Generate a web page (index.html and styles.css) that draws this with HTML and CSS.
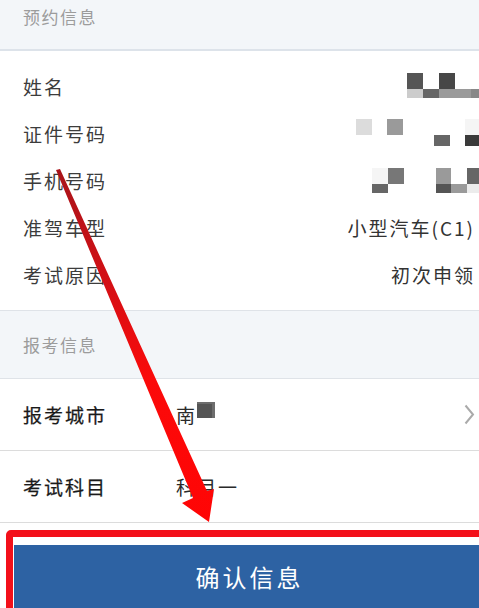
FILE: index.html
```html
<!DOCTYPE html>
<html lang="zh-CN">
<head>
<meta charset="utf-8">
<title>确认信息</title>
<link rel="stylesheet" href="styles.css">
</head>
<body>
<div class="page">
  <div class="group-title first">预约信息</div>
  <div class="info">
    <div class="row">
      <span class="label">姓名</span>
      <div class="mosaic m-name">
        <i class="k5"></i><i></i><i class="k4"></i><i></i><i></i>
        <i class="kc"></i><i class="k6"></i><i class="k9"></i><i class="k9"></i><i class="k8"></i>
      </div>
    </div>
    <div class="row">
      <span class="label">证件号码</span>
      <div class="mosaic m-id">
        <i class="kd"></i><i></i><i class="k9"></i><i></i><i></i><i></i><i></i><i class="kf"></i>
        <i></i><i></i><i></i><i></i><i></i><i class="k6"></i><i></i><i class="k3"></i>
      </div>
    </div>
    <div class="row">
      <span class="label">手机号码</span>
      <div class="mosaic m-phone">
        <i class="kf"></i><i class="k7"></i><i></i><i></i><i class="k9"></i><i></i><i class="k6"></i>
        <i class="k6"></i><i></i><i></i><i></i><i class="k5"></i><i class="k9"></i><i class="ke"></i>
      </div>
    </div>
    <div class="row">
      <span class="label">准驾车型</span>
      <span class="value">小型汽车(C1)</span>
    </div>
    <div class="row">
      <span class="label">考试原因</span>
      <span class="value">初次申领</span>
    </div>
  </div>

  <div class="group-title">报考信息</div>
  <div class="field">
    <span class="field-label">报考城市</span>
    <span class="field-value">南<span class="blot"></span></span>
    <svg class="chevron" width="11" height="21" viewBox="0 0 11 21" aria-hidden="true">
      <polyline points="1.5,1.5 9,10.5 1.5,19.5" fill="none" stroke="#aaaaaa" stroke-width="2"/>
    </svg>
  </div>
  <div class="field">
    <span class="field-label">考试科目</span>
    <span class="field-value">科目一</span>
  </div>

  <div class="actions">
    <div class="confirm">确认信息</div>
  </div>

  <div class="mark-frame"></div>
  <svg class="mark-arrow" width="479" height="608" viewBox="0 0 479 608" aria-hidden="true">
    <defs>
      <linearGradient id="ag" gradientUnits="userSpaceOnUse" x1="0" y1="170" x2="0" y2="520">
        <stop offset="0" stop-color="#a8141a"/>
        <stop offset="0.35" stop-color="#d80f14"/>
        <stop offset="0.6" stop-color="#fb0a0a"/>
        <stop offset="1" stop-color="#ff0505"/>
      </linearGradient>
    </defs>
    <polygon points="56,170 60,169 207,491 214,489 209,522 182,503 193,498" fill="url(#ag)"/>
  </svg>
</div>
</body>
</html>
```

FILE: styles.css
```css
html, body {
  margin: 0;
  padding: 0;
  background: #ffffff;
}

.page {
  position: relative;
  width: 479px;
  height: 608px;
  overflow: hidden;
  font-family: "Noto Sans CJK SC", "Noto Sans", sans-serif;
  color: #3a3a3a;
}

.group-title {
  display: flex;
  align-items: center;
  height: 67px;
  padding-left: 23px;
  background: #f3f6f9;
  border-bottom: 1px solid #dfe3e8;
  color: #9c9c9c;
  font-size: 17px;
  letter-spacing: 1.5px;
}

.group-title.first {
  margin-top: -17px;
  height: 66px;
  border-bottom: 2px solid #dde3ea;
}

.info {
  padding: 12px 0;
  border-bottom: 1px solid #dfe3e8;
}

.row {
  display: flex;
  align-items: center;
  height: 47px;
  padding: 0 4px 0 23px;
}

.label {
  font-size: 19px;
  letter-spacing: 2px;
  color: #3c3c3c;
  white-space: nowrap;
}

.value {
  margin-left: auto;
  font-size: 19px;
  letter-spacing: 2px;
  color: #333333;
  white-space: nowrap;
}

.mosaic {
  margin-left: auto;
  display: grid;
  flex-shrink: 0;
}

.mosaic i {
  display: block;
}

.m-name {
  grid-template-columns: repeat(5, 16px);
  grid-template-rows: 16px 9px;
  margin-right: -12px;
  margin-top: -2px;
}

.m-id {
  grid-template-columns: repeat(8, 15.6px);
  grid-template-rows: 16px 11px;
  margin-right: -6px;
  margin-top: -2px;
}

.m-phone {
  grid-template-columns: repeat(7, 15.8px);
  grid-template-rows: 16px 9px;
  margin-right: -8px;
  margin-top: -1px;
}

.k3 { background: #3a3a3a; }
.k4 { background: #474747; }
.k5 { background: #555555; }
.k6 { background: #666666; }
.k7 { background: #777777; }
.k8 { background: #888888; }
.k9 { background: #9a9a9a; }
.kc { background: #cccccc; }
.kd { background: #dcdcdc; }
.ke { background: #ececec; }
.kf { background: #f5f5f5; }

.field {
  display: flex;
  align-items: center;
  height: 71px;
  padding: 0 4px 0 23px;
  border-bottom: 1px solid #dcdcdc;
}

.field-label {
  flex: 0 0 153px;
  font-size: 19px;
  letter-spacing: 2px;
  color: #1a1a1a;
  white-space: nowrap;
  -webkit-text-stroke: 0.25px #1a1a1a;
}

.field-value {
  display: flex;
  align-items: flex-start;
  font-size: 19px;
  letter-spacing: 2px;
  color: #2a2a2a;
  white-space: nowrap;
}

.blot {
  display: block;
  width: 18px;
  height: 16px;
  margin-top: 1px;
  background: #555555;
  box-shadow: inset -4px 3px 0 -1px #6d6d6d;
}

.chevron {
  margin-left: auto;
  margin-right: 0;
  display: block;
}

.actions {
  padding: 22px 0 0 14px;
}

.confirm {
  display: flex;
  align-items: center;
  justify-content: center;
  width: 468px;
  height: 64px;
  padding-left: 3px;
  padding-bottom: 2px;
  box-sizing: border-box;
  background: #2d62a3;
  color: #ffffff;
  font-size: 24px;
  letter-spacing: 3px;
}

.mark-frame {
  position: absolute;
  left: 6px;
  top: 530px;
  width: 520px;
  height: 120px;
  border: 7px solid #f3101a;
  border-radius: 5px;
  pointer-events: none;
}

.mark-arrow {
  position: absolute;
  left: 0;
  top: 0;
  pointer-events: none;
}
```
